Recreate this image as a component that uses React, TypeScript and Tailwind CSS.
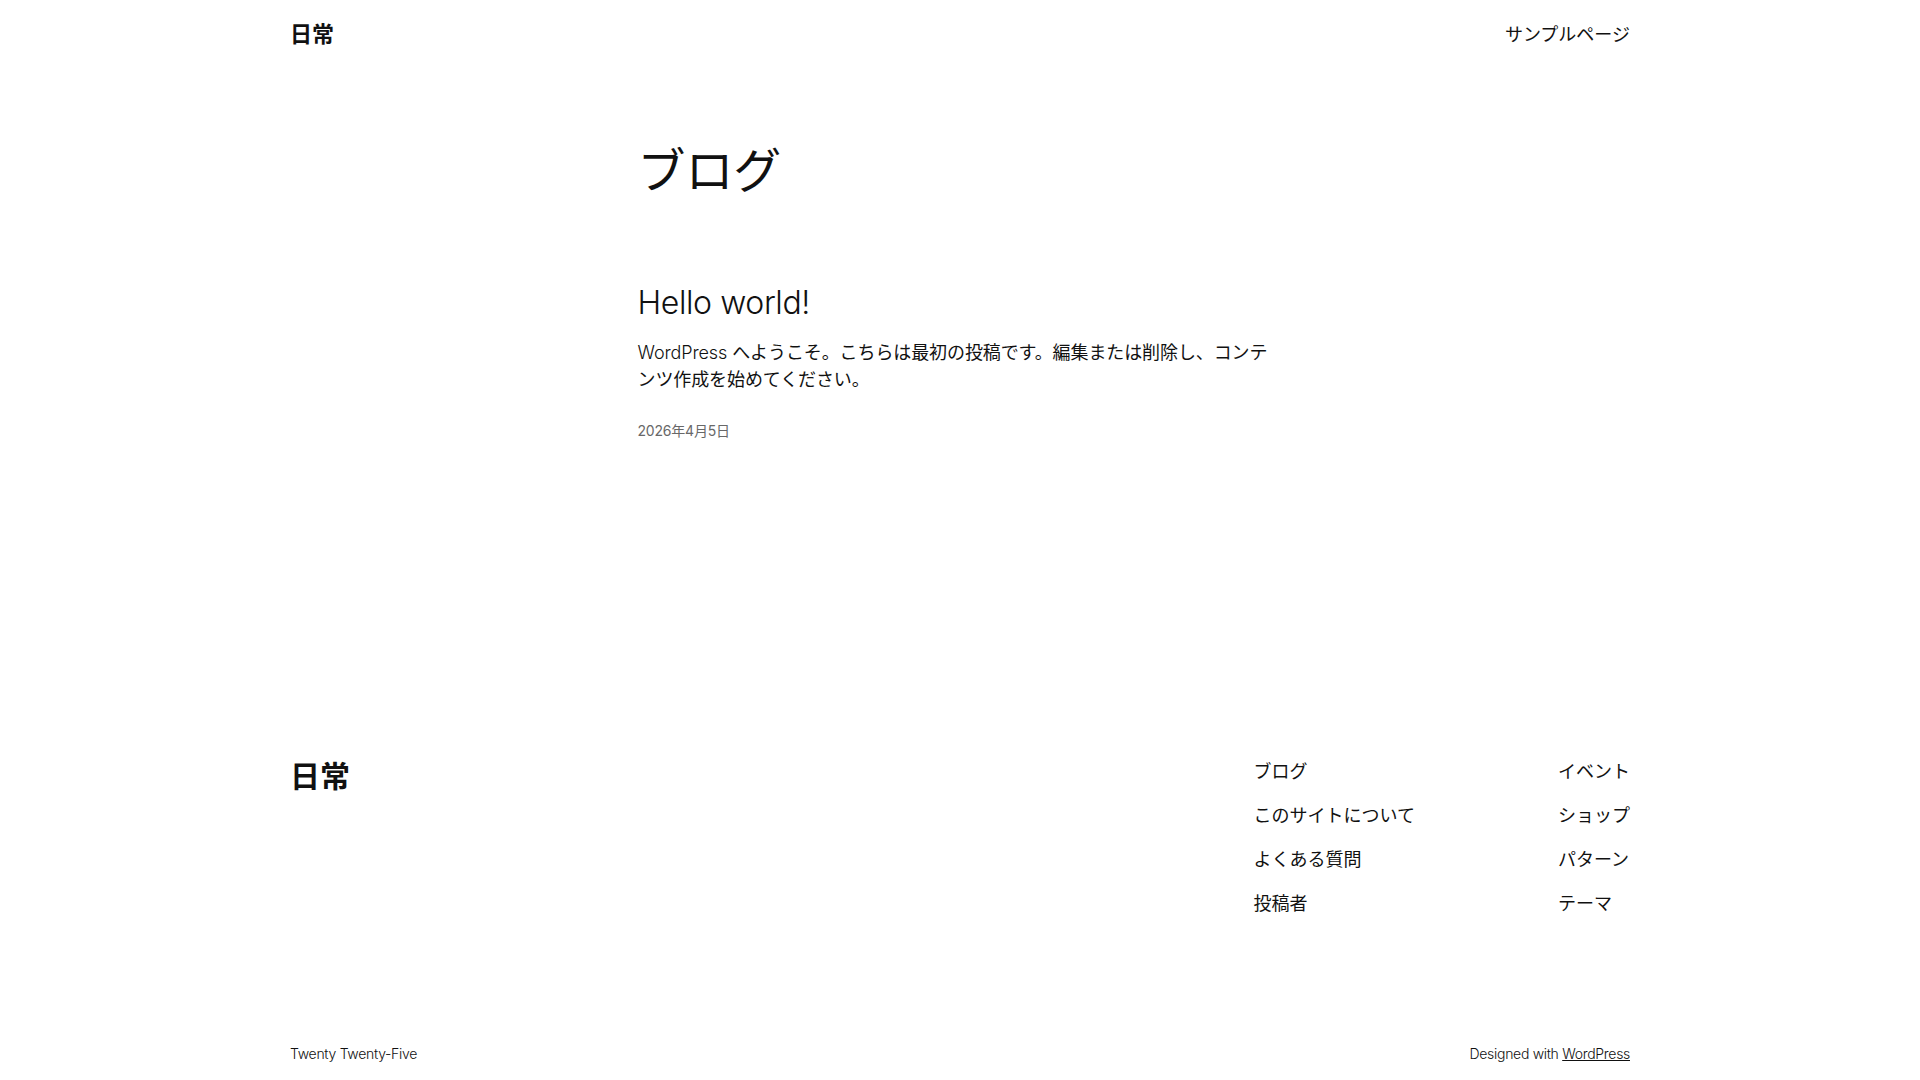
import React from "react";

const footerLeft = ["ブログ", "このサイトについて", "よくある質問", "投稿者"];
const footerRight = ["イベント", "ショップ", "パターン", "テーマ"];

const App = () => {
	return (
		<div className="min-h-screen bg-white text-[#111111] font-['Inter','Noto_Sans_CJK_JP',sans-serif]">
			<header className="mx-auto w-[1340px] h-[68px] flex items-center justify-between">
				<a href="#" className="text-[22px] font-bold leading-none">
					日常
				</a>
				<nav>
					<a href="#" className="text-[18px] leading-[27px]">
						サンプルページ
					</a>
				</nav>
			</header>

			<main className="mx-auto w-[645px] pt-[74px]">
				<h1 className="text-[48px] leading-[58px] font-normal tracking-[-0.1px]">
					ブログ
				</h1>
				<article className="mt-[84px]">
					<h2 className="text-[32px] leading-[38px] font-light tracking-[-0.4px]">
						<a href="#">Hello world!</a>
					</h2>
					<p className="mt-[17px] text-[18px] leading-[27px] tracking-[-0.1px]">
						<span className="font-light">WordPress</span> へようこそ。こちらは最初の投稿です。編集または削除し、コンテンツ作成を始めてください。
					</p>
					<div className="mt-[27px] text-[14px] leading-[21px] text-[#686868] tracking-[-0.2px]">
						2026年4月5日
					</div>
				</article>
			</main>

			<footer className="mx-auto w-[1340px] mt-[317px] pb-[16px]">
				<div className="flex justify-between items-start">
					<a href="#" className="text-[30px] leading-[36px] font-bold">
						日常
					</a>
					<div className="flex gap-[143px]">
						<ul className="flex flex-col gap-[17px] text-[18px] leading-[27px]">
							{footerLeft.map((item) => (
								<li key={item}>
									<a href="#">{item}</a>
								</li>
							))}
						</ul>
						<ul className="flex flex-col gap-[17px] text-[18px] leading-[27px]">
							{footerRight.map((item) => (
								<li key={item}>
									<a href="#">{item}</a>
								</li>
							))}
						</ul>
					</div>
				</div>
				<div className="mt-[126px] flex justify-between text-[14px] leading-[21px] font-light tracking-[-0.3px]">
					<p>Twenty Twenty-Five</p>
					<p>
						Designed with{" "}
						<a href="#" className="underline">
							WordPress
						</a>
					</p>
				</div>
			</footer>
		</div>
	);
};

export default App;
